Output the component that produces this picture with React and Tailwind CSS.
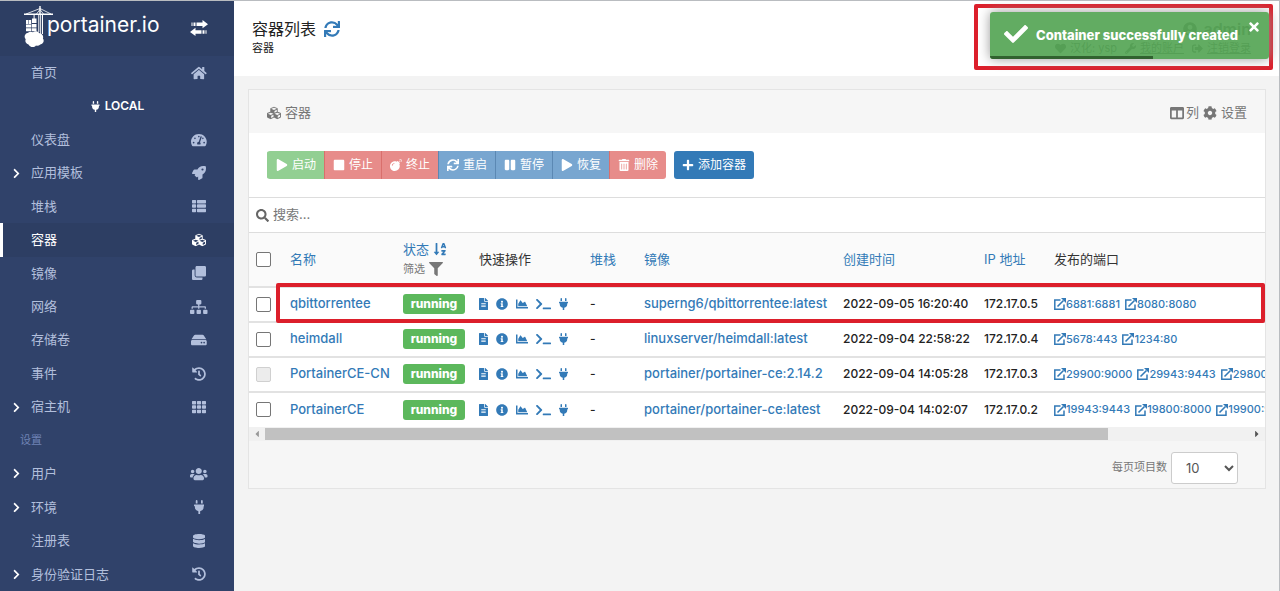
import React, { useState } from "react";
import {
  FaBomb,
  FaCaretLeft,
  FaCaretRight,
  FaChartArea,
  FaCheck,
  FaChevronRight,
  FaClone,
  FaCog,
  FaColumns,
  FaCubes,
  FaDatabase,
  FaFileAlt,
  FaFilter,
  FaHdd,
  FaHeart,
  FaHistory,
  FaHome,
  FaInfoCircle,
  FaPause,
  FaPlay,
  FaPlug,
  FaPlus,
  FaRocket,
  FaSearch,
  FaSignOutAlt,
  FaSitemap,
  FaSortAlphaDown,
  FaStop,
  FaSync,
  FaTachometerAlt,
  FaTerminal,
  FaTh,
  FaThList,
  FaTimes,
  FaTrashAlt,
  FaUserCircle,
  FaUsers,
  FaWrench,
} from "react-icons/fa";

const endpointMenu = [
  { label: "仪表盘", icon: FaTachometerAlt },
  { label: "应用模板", icon: FaRocket, expandable: true },
  { label: "堆栈", icon: FaThList },
  { label: "容器", icon: FaCubes, active: true },
  { label: "镜像", icon: FaClone },
  { label: "网络", icon: FaSitemap },
  { label: "存储卷", icon: FaHdd },
  { label: "事件", icon: FaHistory },
  { label: "宿主机", icon: FaTh, expandable: true },
];

const settingsMenu = [
  { label: "用户", icon: FaUsers, expandable: true },
  { label: "环境", icon: FaPlug, expandable: true },
  { label: "注册表", icon: FaDatabase },
  { label: "身份验证日志", icon: FaHistory, expandable: true },
];

const actions = [
  { label: "启动", icon: FaPlay, className: "bg-[#92cf92] border-[#92cf92]" },
  { label: "停止", icon: FaStop, className: "bg-[#e78c8a] border-[#d96f6c]" },
  { label: "终止", icon: FaBomb, className: "bg-[#e78c8a] border-[#d96f6c]" },
  { label: "重启", icon: FaSync, className: "bg-[#78a6d0] border-[#5b88b3]" },
  { label: "暂停", icon: FaPause, className: "bg-[#78a6d0] border-[#5b88b3]" },
  { label: "恢复", icon: FaPlay, className: "bg-[#78a6d0] border-[#5b88b3]" },
  { label: "删除", icon: FaTrashAlt, className: "bg-[#e78c8a] border-[#d96f6c]" },
];

const containers = [
  {
    name: "qbittorrentee",
    image: "superng6/qbittorrentee:latest",
    created: "2022-09-05 16:20:40",
    ip: "172.17.0.5",
    ports: ["6881:6881", "8080:8080"],
  },
  {
    name: "heimdall",
    image: "linuxserver/heimdall:latest",
    created: "2022-09-04 22:58:22",
    ip: "172.17.0.4",
    ports: ["5678:443", "1234:80"],
  },
  {
    name: "PortainerCE-CN",
    image: "portainer/portainer-ce:2.14.2",
    created: "2022-09-04 14:05:28",
    ip: "172.17.0.3",
    ports: ["29900:9000", "29943:9443", "29800:8000"],
    locked: true,
  },
  {
    name: "PortainerCE",
    image: "portainer/portainer-ce:latest",
    created: "2022-09-04 14:02:07",
    ip: "172.17.0.2",
    ports: ["19943:9443", "19800:8000", "19900:9000"],
  },
];

const quickActions = [
  { label: "日志", icon: FaFileAlt },
  { label: "详情", icon: FaInfoCircle },
  { label: "统计", icon: FaChartArea },
  { label: "控制台", icon: FaTerminal },
  { label: "附加", icon: FaPlug },
];

const Logo = () => (
  <a href="#home" aria-label="portainer.io" className="flex text-white">
    <svg width="29" height="41" viewBox="0 0 29 41" fill="currentColor">
      {/* crane */}
      <path d="M0 7.5h29v1.600H0zM15.300 0h1.400v8h-1.400z" />
      <path
        d="M2 8 16 2.500 27 8M12.500 8 16 3.500 19.500 8"
        fill="none"
        stroke="currentColor"
        strokeWidth="0.8"
      />
      <path d="M14.300 9h1v17h-1zM16.200 9h.9v19h-.9zM18 9h1v19h-1zM9.600 9h1v5h-1z" />
      {/* stacked cargo */}
      <path d="M8 12.500h4.500v4.500H8zM2 14h2.300v4H2zM4.800 14h2.400v4H4.800zM2 18.600h5.200v3H2zM7.800 18h4.700v3.600H7.800zM2 22.200h5.200v3H2zM7.800 22.200h4.700v3H7.800z" />
      {/* whale cloud */}
      <path d="M4.500 38.500a3.800 3.800 0 0 1-2.800-5.200A3.900 3.900 0 0 1 4 26.800a4.500 4.500 0 0 1 5-.6 4.600 4.600 0 0 1 6.600 1 4 4 0 0 1 3.300 5.300 3.700 3.700 0 0 1-2.600 5.900 4.400 4.400 0 0 1-4.300 1.200 4.500 4.500 0 0 1-7.500-1.100z" />
    </svg>
    <span className="-ml-1.5 mt-[7px] text-[21px] leading-6">
      portainer.io
    </span>
  </a>
);

const TransferIcon = () => (
  <svg width="18" height="16" viewBox="0 0 18 16" fill="currentColor">
    <path d="M12.500 0 18 4.200l-5.500 4.100V6H6.500V2.600h6zM1.500 2.600h1V6h-1zM3.500 2.600h2V6h-2z" />
    <path d="M5.500 7.800 0 12l5.500 4v-2.300h6v-3.400h-6zM12.500 10.300h2v3.400h-2zM15.500 10.300h1v3.400h-1z" />
  </svg>
);

const ExternalLinkIcon = () => (
  <svg width="12" height="12" viewBox="0 0 12 12" aria-hidden="true">
    <path
      d="M6.500 2H.8v9.200H10V6.500"
      fill="none"
      stroke="currentColor"
      strokeWidth="1.500"
    />
    <path d="M3.500 8.500 9.500 2.500" stroke="currentColor" strokeWidth="1.600" />
    <path d="M7 0h5v5z" fill="currentColor" />
  </svg>
);

const MenuItem = ({ label, icon: Icon, expandable, active }) => (
  <li className="grid">
    <a
      href={`#${label}`}
      className={`flex items-center border-l-3 pl-2 pr-[23px] text-[13px] ${
        active
          ? "border-white bg-[#2d3e63] text-white"
          : "border-transparent text-[#b2bfdc]"
      }`}
    >
      <span className="w-5 text-white">
        {expandable && <FaChevronRight size={11} />}
      </span>
      <span className="flex-1">{label}</span>
      <span className="flex w-6 justify-center">
        <Icon size="auto" className="h-3.5 w-auto shrink-0" />
      </span>
    </a>
  </li>
);

const Sidebar = () => (
  <nav className="flex w-[234px] shrink-0 flex-col bg-[#30426a]">
    <div className="flex h-[55px] items-start justify-between bg-[#2d3e63] pl-6 pr-6 pt-[5px]">
      <Logo />
      <button
        type="button"
        aria-label="折叠菜单"
        className="mt-3.5 px-0.5 text-white"
      >
        <TransferIcon />
      </button>
    </div>
    <ul className="grid flex-1 auto-rows-fr">
      <MenuItem label="首页" icon={FaHome} />
      <li className="flex items-center justify-center gap-1 text-xs font-semibold text-white">
        <FaPlug size={11} /> LOCAL
      </li>
      {endpointMenu.map((item) => (
        <MenuItem key={item.label} {...item} />
      ))}
      <li className="flex items-center pl-5 text-[11px] text-[#6f82b5]">
        设置
      </li>
      {settingsMenu.map((item) => (
        <MenuItem key={item.label} {...item} />
      ))}
    </ul>
  </nav>
);

const Toast = ({ onClose }) => (
  <div
    role="status"
    className="absolute right-1.5 top-[3px] z-10 w-[299px] rounded-[2px] border-4 border-[#dc1f2b] pb-[7px] pl-3 pt-1"
  >
    <div className="overflow-hidden rounded-[3px] bg-[#51a351]/90 shadow-[0_0_12px_#999]">
      <div className="flex h-11 items-center gap-2 pl-3.5 pr-2 text-white">
        <FaCheck size={24} />
        <span className="flex-1 whitespace-nowrap pt-1 text-[13px] font-extrabold">
          Container successfully created
        </span>
        <button
          type="button"
          onClick={onClose}
          aria-label="关闭"
          className="self-start pt-2"
        >
          <FaTimes size={14} />
        </button>
      </div>
      <div className="h-[3px] w-7/12 bg-[#31622f]" />
    </div>
  </div>
);

const Header = () => (
  <header className="flex h-[75px] justify-between bg-white pl-[18px] pr-7 pt-4">
    <div>
      <h1 className="flex items-center gap-2 text-base leading-6">
        容器列表
        <button type="button" aria-label="刷新" className="text-[#337ab7]">
          <FaSync size={16} />
        </button>
      </h1>
      <p className="text-[11px] leading-[14px]">容器</p>
    </div>
    <div className="flex flex-col items-end text-[#777]">
      <p className="flex items-center gap-1.5 text-base font-semibold leading-6">
        <FaUserCircle size={14} /> admin
      </p>
      <div className="flex gap-2 text-[11px] leading-[14px]">
        <span className="flex items-center gap-1">
          <FaHeart size={11} /> 汉化: ysp
        </span>
        <a href="#account" className="flex items-center gap-1 underline">
          <FaWrench size={11} /> 我的账户
        </a>
        <a href="#logout" className="flex items-center gap-1 underline">
          <FaSignOutAlt size={11} /> 注销登录
        </a>
      </div>
    </div>
  </header>
);

const Checkbox = ({ label, disabled }) => (
  <input
    type="checkbox"
    aria-label={label}
    disabled={disabled}
    className="block size-[15px] appearance-none rounded-[2px] border border-[#767676] bg-white checked:bg-[#337ab7] disabled:border-[#d0d0d0] disabled:bg-[#ececec]"
  />
);

const ContainerRow = ({ name, image, created, ip, ports, locked }) => (
  <tr className="h-[35px] border-t-2 border-[#e2e2e2] bg-white">
    <td className="pl-[7px]">
      <Checkbox label={name} disabled={locked} />
    </td>
    <td>
      <a href={`#${name}`} className="text-[13px] text-[#337ab7]">
        {name}
      </a>
    </td>
    <td>
      <span className="block w-[62px] rounded-[3px] bg-[#5cb85c] text-center text-xs font-extrabold leading-5 text-white">
        running
      </span>
    </td>
    <td>
      <div className="flex items-center gap-2 text-[#337ab7]">
        {quickActions.map(({ label, icon: Icon }) => (
          <a key={label} href={`#${name}`} aria-label={label}>
            <Icon size="auto" className="h-3 w-auto" />
          </a>
        ))}
      </div>
    </td>
    <td>-</td>
    <td>
      <a href={`#${image}`} className="text-[13px] text-[#337ab7]">
        {image}
      </a>
    </td>
    <td>{created}</td>
    <td>{ip}</td>
    <td>
      <div className="flex gap-[5px]">
        {ports.map((port) => (
          <a
            key={port}
            href={`#${port}`}
            className="flex items-center text-[11px] text-[#337ab7]"
          >
            <ExternalLinkIcon />
            {port}
          </a>
        ))}
      </div>
    </td>
  </tr>
);

const ContainerTable = () => (
  <div className="relative">
    <div className="overflow-hidden">
      <table className="w-[1200px] table-fixed whitespace-nowrap text-left text-xs font-medium">
        <colgroup>
          <col className="w-[41px]" />
          <col className="w-[113px]" />
          <col className="w-[76px]" />
          <col className="w-[111px]" />
          <col className="w-[54px]" />
          <col className="w-[199px]" />
          <col className="w-[141px]" />
          <col className="w-[70px]" />
          <col />
        </colgroup>
        <thead>
          <tr className="h-[54px] border-t border-[#ddd] bg-[#fafafa] text-[13px] text-[#337ab7] [&>th]:font-normal">
            <th className="pl-[7px]">
              <Checkbox label="全选" />
            </th>
            <th>名称</th>
            <th>
              <div className="flex items-center gap-1 leading-5">
                状态 <FaSortAlphaDown size={14} />
              </div>
              <div className="flex items-center gap-1 text-[11px] leading-5 text-[#777]">
                筛选 <FaFilter size={14} />
              </div>
            </th>
            <th className="text-[#333]">快速操作</th>
            <th>堆栈</th>
            <th>镜像</th>
            <th>创建时间</th>
            <th>IP 地址</th>
            <th className="text-[#333]">发布的端口</th>
          </tr>
        </thead>
        <tbody>
          {containers.map((container) => (
            <ContainerRow key={container.name} {...container} />
          ))}
        </tbody>
      </table>
    </div>
    {/* marker around the newest container */}
    <div className="pointer-events-none absolute left-[27px] right-0 top-[51px] h-10 rounded-[2px] border-4 border-[#dc1f2b]" />
    <div className="flex h-[14px] items-center bg-[#f1f1f1] text-[#555]">
      <FaCaretLeft size={10} className="mx-[3px] text-[#999]" />
      <div className="flex-1">
        <div className="h-3 w-6/7 bg-[#c1c1c1]" />
      </div>
      <FaCaretRight size={10} className="mx-[3px]" />
    </div>
  </div>
);

const App = () => {
  const [showToast, setShowToast] = useState(true);

  return (
    <div className="relative flex min-h-screen border-r border-t border-[#b9bcc0] bg-[#f3f3f3] font-[Inter,'Noto_Sans_CJK_SC',sans-serif] text-[#222]">
      {showToast && <Toast onClose={() => setShowToast(false)} />}
      <Sidebar />
      <div className="min-w-0 flex-1">
        <Header />
        <main className="py-[13px] pl-3.5 pr-[13px]">
          <section className="border border-[#e4e4e4] bg-[#f6f6f6]">
            <div className="flex h-[43px] items-center justify-between px-[18px] pt-0.5 text-[13px] text-[#777]">
              <h2 className="flex items-center gap-1">
                <FaCubes size={14} /> 容器
              </h2>
              <div className="flex items-center gap-1">
                <button type="button" className="flex items-center gap-0.5">
                  <FaColumns size={14} /> 列
                </button>
                <button type="button" className="flex items-center gap-1">
                  <FaCog size={14} /> 设置
                </button>
              </div>
            </div>
            <div className="flex items-center gap-2 bg-white p-[18px] text-xs text-white">
              <div className="flex overflow-hidden rounded-[3px]">
                {actions.map(({ label, icon: Icon, className }) => (
                  <button
                    key={label}
                    type="button"
                    disabled
                    className={`flex h-7 items-center gap-1 border-l px-2 ${className}`}
                  >
                    <Icon size={12} /> {label}
                  </button>
                ))}
              </div>
              <button
                type="button"
                className="flex h-7 items-center gap-1 rounded-[3px] bg-[#337ab7] px-2"
              >
                <FaPlus size={12} /> 添加容器
              </button>
            </div>
            <label className="flex h-[35px] items-center gap-1 border-t border-[#ddd] bg-white px-[7px] text-[#666]">
              <FaSearch size={13} />
              <input
                type="text"
                aria-label="搜索"
                placeholder="搜索..."
                className="flex-1 text-[13px] outline-none placeholder:text-[#777]"
              />
            </label>
            <ContainerTable />
            <div className="flex items-center justify-end gap-1 px-[27px] pb-1 pt-[11px] text-[11px] text-[#777]">
              <label htmlFor="page-size">每页项目数</label>
              <select
                id="page-size"
                defaultValue="10"
                className="h-8 w-[67px] rounded-[3px] border border-[#ccc] bg-white px-2.5 text-[13px] text-[#555]"
              >
                <option>10</option>
                <option>25</option>
                <option>50</option>
              </select>
            </div>
          </section>
        </main>
      </div>
    </div>
  );
};

export default App;
